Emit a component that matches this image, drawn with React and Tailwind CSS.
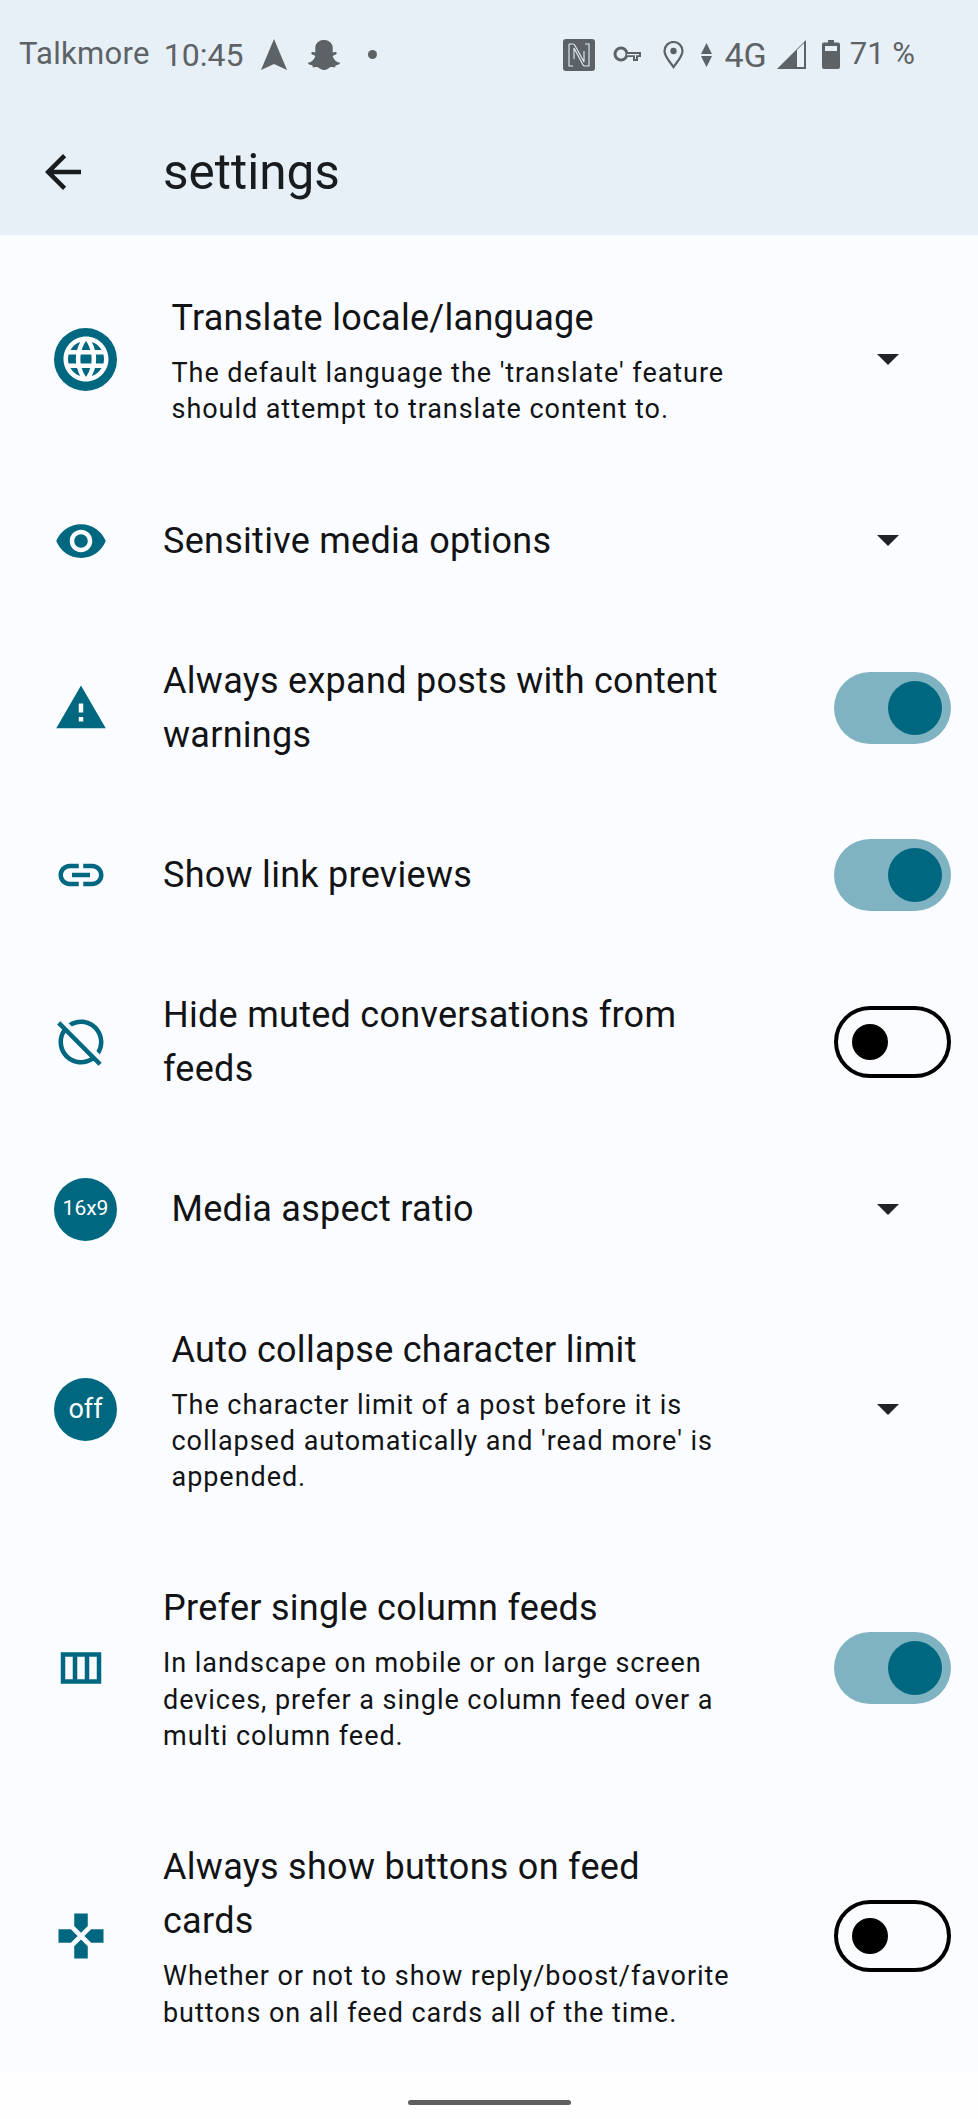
import React from "react";
import { MdLanguage, MdVisibility, MdWarning, MdOutlineLink, MdHideSource, MdOutlineViewColumn, MdGamepad, MdArrowBack } from "react-icons/md";
import { FaSnapchatGhost } from "react-icons/fa";

const Nfc = () => (
  <svg className="w-[32px] h-[32px]" viewBox="0 0 32 32" fill="none">
    <rect x="0" y="0" width="32" height="32" rx="3" fill="#5d6266" />
    <path d="M6 5 H10 C11 5 11.500 5.500 12 6.500 L21 23 V12" stroke="#e7f0f6" strokeWidth="1.100" />
    <path d="M6 5 V27 H10" stroke="#e7f0f6" strokeWidth="1.100" />
    <path d="M11 20 V9 L20 26 C20.500 27 21 27 22 27 H26 V5 H22" stroke="#e7f0f6" strokeWidth="1.100" />
  </svg>
);
const Key = () => (
  <svg className="w-[28px] h-[17px]" viewBox="0 0 28 17" fill="none">
    <circle cx="8" cy="8" r="6" stroke="#5d6266" strokeWidth="3" />
    <path d="M13 6 H28 V11 H25 V15 H20 V11 H13 Z" fill="#5d6266" />
    <path d="M14 8 H26 V9.200 H23 V13 H22 V9.200 H14 Z" fill="#e7f0f6" />
  </svg>
);
const Pin = () => (
  <svg className="w-[21px] h-[28px]" viewBox="0 0 21 28" fill="none">
    <path d="M10.500 26 C7 21 1.500 15.500 1.500 10 A9 9 0 0 1 19.500 10 C19.500 15.500 14 21 10.500 26 Z" stroke="#5d6266" strokeWidth="2.200" />
    <circle cx="10.500" cy="10" r="3.200" fill="#5d6266" />
  </svg>
);
const Updown = () => (
  <svg className="w-[11px] h-[24px]" viewBox="0 0 11 24">
    <path d="M5.500 0 L11 11 H0 Z M0 13 H11 L5.500 24 Z" fill="#5d6266" />
  </svg>
);
const Signal = () => (
  <svg className="w-[29px] h-[29px]" viewBox="0 0 29 29" fill="none">
    <path d="M0 29 L29 0 V29 Z" fill="#5d6266" />
    <path d="M20 27 V10 L27 3 V27 Z" fill="#e7f0f6" />
  </svg>
);
const Battery = () => (
  <svg className="w-[18px] h-[29px]" viewBox="0 0 18 29">
    <path d="M6 0 H12 V2.500 H16 A2 2 0 0 1 18 4.500 V27 A2 2 0 0 1 16 29 H2 A2 2 0 0 1 0 27 V4.500 A2 2 0 0 1 2 2.500 H6 Z" fill="#5d6266" />
    <rect x="3" y="6" width="12" height="5" fill="#e7f0f6" />
  </svg>
);
const NavArrow = () => (
  <svg className="w-[26px] h-[31px]" viewBox="0 0 26 31">
    <path d="M13 0 L26 31 L13 25 L0 31 Z" fill="#5d6266" />
  </svg>
);

const Chevron = () => (
  <div className="w-[117px] flex justify-center pr-[10px] shrink-0">
    <div className="w-0 h-0 border-l-[11px] border-r-[11px] border-t-[11px] border-l-transparent border-r-transparent border-t-[#1f2325]" />
  </div>
);

const SwitchOn = () => (
  <div className="w-[117px] h-[72px] -my-[9px] rounded-full bg-[#7fb3c2] flex items-center justify-end pr-[9px] shrink-0">
    <div className="w-[54px] h-[54px] rounded-full bg-[#006780]" />
  </div>
);
const SwitchOff = () => (
  <div className="w-[117px] h-[72px] -my-[9px] rounded-full border-[4.500px] border-black flex items-center pl-[13.500px] shrink-0">
    <div className="w-[36px] h-[36px] rounded-full bg-black" />
  </div>
);

const Circle = ({ children }) => (
  <div className="w-[63px] h-[63px] -my-[4px] rounded-full bg-[#006780] flex items-center justify-center text-white shrink-0">{children}</div>
);
const Plain = ({ children }) => (
  <div className="w-[54px] h-[54px] flex items-center justify-center text-[#006780] shrink-0 mr-[1px]">{children}</div>
);

const Row = ({ icon, title, sub, trailing, circled }) => (
  <div className="flex items-center pl-[54px] pr-[27px] py-[43px]">
    {icon}
    <div className={circled ? "flex-1 ml-[54.500px] mr-[104px] min-w-0" : "flex-1 ml-[54px] mr-[103px] min-w-0"}>
      <div className="text-[36px] leading-[54px] tracking-[0.28px] text-[#111315]">{title}</div>
      {sub && <div className="mt-[10px] text-[27px] leading-[36.300px] tracking-[0.95px] text-[#111315]">{sub}</div>}
    </div>
    {trailing}
  </div>
);

export default function App() {
  return (
    <div className="w-[978px] h-[2119px] bg-white flex flex-col overflow-hidden font-['Roboto',sans-serif]">
      <header className="h-[235px] bg-[#e7f0f6] shrink-0">
        <div className="h-[109px] flex items-center justify-between pl-[19px] pr-[63px] text-[#5d6266] text-[31px]">
          <div className="flex items-center">
            <span className="tracking-[0.3px]">Talkmore</span>
            <span className="ml-[14px] text-[32px] font-[450]">10:45</span>
            <span className="ml-[17px] flex"><NavArrow /></span>
            <span className="ml-[21px] flex"><FaSnapchatGhost size={32} /></span>
            <span className="ml-[28px] w-[9px] h-[9px] rounded-full bg-[#5d6266]" />
          </div>
          <div className="flex items-center">
            <Nfc />
            <span className="ml-[18px] flex"><Key /></span>
            <span className="ml-[22px] flex"><Pin /></span>
            <span className="ml-[17px] flex"><Updown /></span>
            <span className="ml-[12px] text-[34px] leading-[34px]">4G</span>
            <span className="ml-[10px] flex"><Signal /></span>
            <span className="ml-[16px] flex"><Battery /></span>
            <span className="ml-[10px]">71 %</span>
          </div>
        </div>
        <div className="h-[126px] flex items-center pl-[36px]">
          <MdArrowBack size={54} className="text-[#191c1e]" />
          <span className="ml-[73px] text-[49.500px] leading-[63px] text-[#191c1e]">settings</span>
        </div>
      </header>
      <main className="h-[1837px] bg-[#fbfcff] pt-[13px] overflow-hidden shrink-0">
        <Row circled icon={<Circle><MdLanguage size={54} /></Circle>} title="Translate locale/language" sub="The default language the 'translate' feature should attempt to translate content to." trailing={<Chevron />} />
        <Row icon={<Plain><MdVisibility size={54} /></Plain>} title="Sensitive media options" trailing={<Chevron />} />
        <Row icon={<Plain><MdWarning size={54} /></Plain>} title="Always expand posts with content warnings" trailing={<SwitchOn />} />
        <Row icon={<Plain><MdOutlineLink size={54} /></Plain>} title="Show link previews" trailing={<SwitchOn />} />
        <Row icon={<Plain><MdHideSource size={54} /></Plain>} title="Hide muted conversations from feeds" trailing={<SwitchOff />} />
        <Row circled icon={<Circle><span className="text-[21px]">16x9</span></Circle>} title="Media aspect ratio" trailing={<Chevron />} />
        <Row circled icon={<Circle><span className="text-[27px]">off</span></Circle>} title="Auto collapse character limit" sub="The character limit of a post before it is collapsed automatically and 'read more' is appended." trailing={<Chevron />} />
        <Row icon={<Plain><MdOutlineViewColumn size={54} /></Plain>} title="Prefer single column feeds" sub="In landscape on mobile or on large screen devices, prefer a single column feed over a multi column feed." trailing={<SwitchOn />} />
        <Row icon={<Plain><MdGamepad size={54} /></Plain>} title="Always show buttons on feed cards" sub="Whether or not to show reply/boost/favorite buttons on all feed cards all of the time." trailing={<SwitchOff />} />
      </main>
      <footer className="flex-1 bg-[#fffefe] flex justify-center">
        <div className="mt-[28px] w-[163px] h-[5px] rounded-full bg-[#5f5f5f]" />
      </footer>
    </div>
  );
}
